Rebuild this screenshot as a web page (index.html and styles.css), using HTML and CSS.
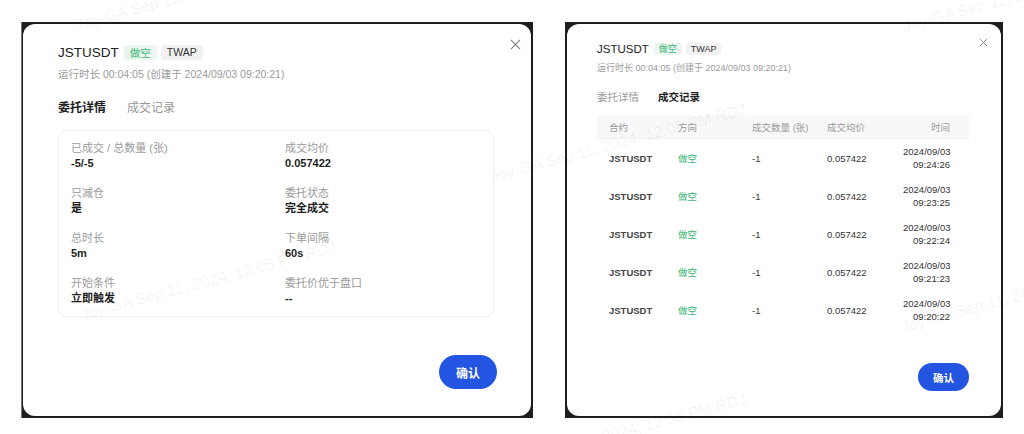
FILE: index.html
```html
<!DOCTYPE html>
<html lang="zh-CN">
<head>
  <meta charset="UTF-8" />
  <meta name="viewport" content="width=device-width, initial-scale=1.0" />
  <title>TWAP 委托详情</title>
  <link rel="stylesheet" href="styles.css">
</head>
<body>
  <div class="shots">
    <section class="frame frame-detail">
      <div class="modal">
        <button class="modal-close" aria-label="关闭">
          <svg viewBox="0 0 12 12"><path d="M1 1L11 11M11 1L1 11" /></svg>
        </button>
        <div class="title-row">
          <span class="symbol">JSTUSDT</span>
          <span class="tag tag-short">做空</span>
          <span class="tag">TWAP</span>
        </div>
        <p class="run-time">运行时长 00:04:05 (创建于 2024/09/03 09:20:21)</p>
        <div class="tabs">
          <span class="tab active">委托详情</span>
          <span class="tab">成交记录</span>
        </div>
        <div class="detail-box">
          <div class="item"><span class="label">已成交 / 总数量 (张)</span><span class="value">-5/-5</span></div>
          <div class="item"><span class="label">成交均价</span><span class="value">0.057422</span></div>
          <div class="item"><span class="label">只减仓</span><span class="value">是</span></div>
          <div class="item"><span class="label">委托状态</span><span class="value">完全成交</span></div>
          <div class="item"><span class="label">总时长</span><span class="value">5m</span></div>
          <div class="item"><span class="label">下单间隔</span><span class="value">60s</span></div>
          <div class="item"><span class="label">开始条件</span><span class="value">立即触发</span></div>
          <div class="item"><span class="label">委托价优于盘口</span><span class="value">--</span></div>
        </div>
        <div class="modal-foot">
          <button class="btn-confirm">确认</button>
        </div>
      </div>
    </section>

    <section class="frame frame-trades">
      <div class="modal">
        <button class="modal-close" aria-label="关闭">
          <svg viewBox="0 0 12 12"><path d="M1 1L11 11M11 1L1 11" /></svg>
        </button>
        <div class="title-row">
          <span class="symbol">JSTUSDT</span>
          <span class="tag tag-short">做空</span>
          <span class="tag">TWAP</span>
        </div>
        <p class="run-time">运行时长 00:04:05 (创建于 2024/09/03 09:20:21)</p>
        <div class="tabs">
          <span class="tab">委托详情</span>
          <span class="tab active">成交记录</span>
        </div>
        <table class="trades">
          <thead>
            <tr><th>合约</th><th>方向</th><th>成交数量 (张)</th><th>成交均价</th><th class="time">时间</th></tr>
          </thead>
          <tbody>
            <tr><td>JSTUSDT</td><td class="short">做空</td><td>-1</td><td>0.057422</td><td class="time">2024/09/03<br>09:24:26</td></tr>
            <tr><td>JSTUSDT</td><td class="short">做空</td><td>-1</td><td>0.057422</td><td class="time">2024/09/03<br>09:23:25</td></tr>
            <tr><td>JSTUSDT</td><td class="short">做空</td><td>-1</td><td>0.057422</td><td class="time">2024/09/03<br>09:22:24</td></tr>
            <tr><td>JSTUSDT</td><td class="short">做空</td><td>-1</td><td>0.057422</td><td class="time">2024/09/03<br>09:21:23</td></tr>
            <tr><td>JSTUSDT</td><td class="short">做空</td><td>-1</td><td>0.057422</td><td class="time">2024/09/03<br>09:20:22</td></tr>
          </tbody>
        </table>
        <div class="modal-foot">
          <button class="btn-confirm">确认</button>
        </div>
      </div>
    </section>
  </div>

  <div class="watermarks">
    <span class="wm" style="left:78px; top:17px;">Joy-GA Sep 11, 2024, 12:05 PM RDJ</span>
    <span class="wm" style="left:83px; top:307px;">Joy-GA Sep 11, 2024, 12:05 PM RDJ</span>
    <span class="wm" style="left:493px; top:169px;">Joy-GA Sep 11, 2024, 12:05 PM RDJ</span>
    <span class="wm" style="left:493px; top:459px;">Joy-GA Sep 11, 2024, 12:05 PM RDJ</span>
    <span class="wm" style="left:905px; top:19px;">Joy-GA Sep 11, 2024, 12:05 PM RDJ</span>
    <span class="wm" style="left:903px; top:319px;">Joy-GA Sep 11, 2024, 12:05 PM RDJ</span>
  </div>
</body>
</html>
```

FILE: styles.css
```css
html, body {
  margin: 0;
  padding: 0;
}
body {
  position: relative;
  width: 1024px;
  height: 434px;
  overflow: hidden;
  background-color: #fff;
  font-family: "Liberation Sans", "Noto Sans CJK SC", sans-serif;
  color: #222;
}
.shots {
  display: flex;
  align-items: flex-start;
  gap: 32px;
  padding: 22px 0 0 21px;
}
.frame {
  display: flex;
  height: 396px;
  padding: 2px 2px 2px 1px;
  box-sizing: border-box;
  background-color: #1e1e1e;
  border-left: 1px solid #777;
}
.frame-detail {
  width: 512px;
}
.frame-trades {
  width: 438px;
  border-left: none;
  padding-left: 2px;
}
.modal {
  position: relative;
  flex: 1;
  display: flex;
  flex-direction: column;
  background-color: #fff;
  border-radius: 12px;
  padding: 18px 37px 0 35px;
}
.modal-close {
  position: absolute;
  top: 15px;
  right: 10px;
  width: 11px;
  height: 11px;
  padding: 0;
  border: none;
  background: none;
  cursor: pointer;
}
.modal-close svg {
  display: block;
  width: 100%;
  height: 100%;
  fill: none;
  stroke: #777;
  stroke-width: 1.1;
}
.title-row {
  display: flex;
  align-items: center;
  height: 20px;
  gap: 4px;
}
.symbol {
  font-size: 13.5px;
  margin-right: 1px;
}
.tag {
  display: inline-flex;
  align-items: center;
  height: 15px;
  padding: 0 6px;
  border-radius: 3px;
  background-color: #f1f1f1;
  color: #333;
  font-size: 10.5px;
}
.tag-short {
  background-color: #eaf6ef;
  color: #3db676;
}
.run-time {
  margin: 5px 0 0;
  line-height: 15px;
  font-size: 10.5px;
  color: #9b9b9b;
}
.tabs {
  display: flex;
  gap: 21px;
  margin-top: 18px;
  line-height: 17px;
  font-size: 12px;
}
.tab {
  color: #999;
}
.tab.active {
  color: #1e1e1e;
  font-weight: bold;
}
.detail-box {
  display: grid;
  grid-template-columns: 214px 1fr;
  row-gap: 15px;
  margin-top: 13px;
  padding: 10px 12px;
  border: 1px solid #efefef;
  border-radius: 8px;
}
.item {
  display: flex;
  flex-direction: column;
}
.label {
  line-height: 15px;
  font-size: 11px;
  color: #9b9b9b;
}
.value {
  line-height: 15px;
  font-size: 11px;
  font-weight: bold;
  color: #1e1e1e;
}
.modal-foot {
  display: flex;
  justify-content: flex-end;
  margin-top: auto;
  padding-bottom: 27px;
  margin-right: -3px;
}
.btn-confirm {
  height: 34px;
  padding: 0 17px;
  border: none;
  border-radius: 17px;
  background-color: #2354e2;
  color: #fff;
  font-family: inherit;
  font-size: 12px;
  font-weight: bold;
  cursor: pointer;
}

/* 成交记录：截图比例较小 */
.frame-trades .modal {
  padding: 16px 32px 0 30px;
}
.frame-trades .modal-close {
  top: 14px;
  right: 13px;
  width: 9px;
  height: 9px;
}
.frame-trades .title-row {
  height: 17px;
  gap: 4px;
}
.frame-trades .symbol {
  font-size: 11.5px;
}
.frame-trades .tag {
  height: 12px;
  padding: 0 5px;
  font-size: 9px;
}
.frame-trades .run-time {
  margin-top: 5px;
  line-height: 13px;
  font-size: 9px;
}
.frame-trades .tabs {
  gap: 19px;
  margin-top: 15px;
  line-height: 15px;
  font-size: 10.5px;
}
.frame-trades .modal-foot {
  padding-bottom: 25px;
  margin-right: 0;
}
.frame-trades .btn-confirm {
  height: 28px;
  padding: 0 15px;
  border-radius: 14px;
  font-size: 10.5px;
}
.trades {
  width: 100%;
  margin-top: 10px;
  border-collapse: collapse;
  table-layout: fixed;
  font-size: 9.5px;
}
.trades th {
  height: 23px;
  padding: 0 0 0 12px;
  background-color: #f8f8f8;
  border-bottom: 1px solid #f0f0f0;
  color: #999;
  font-weight: normal;
  text-align: left;
}
.trades th:nth-child(1) { width: 57px; }
.trades th:nth-child(2) { width: 62px; }
.trades th:nth-child(3) { width: 63px; }
.trades th:nth-child(4) { width: 64px; }
.trades td {
  height: 38px;
  padding: 0 0 0 12px;
  line-height: 13px;
  color: #333;
}
.trades td:first-child {
  font-weight: bold;
  color: #444;
}
.trades .short {
  color: #3db676;
}
.trades .time {
  text-align: right;
  padding-right: 19px;
}
.watermarks {
  position: absolute;
  inset: 0;
  pointer-events: none;
}
.wm {
  position: absolute;
  white-space: nowrap;
  font-size: 16px;
  line-height: 16px;
  color: rgba(0, 0, 0, 0.06);
  transform: rotate(-15deg);
  transform-origin: left bottom;
}
```
